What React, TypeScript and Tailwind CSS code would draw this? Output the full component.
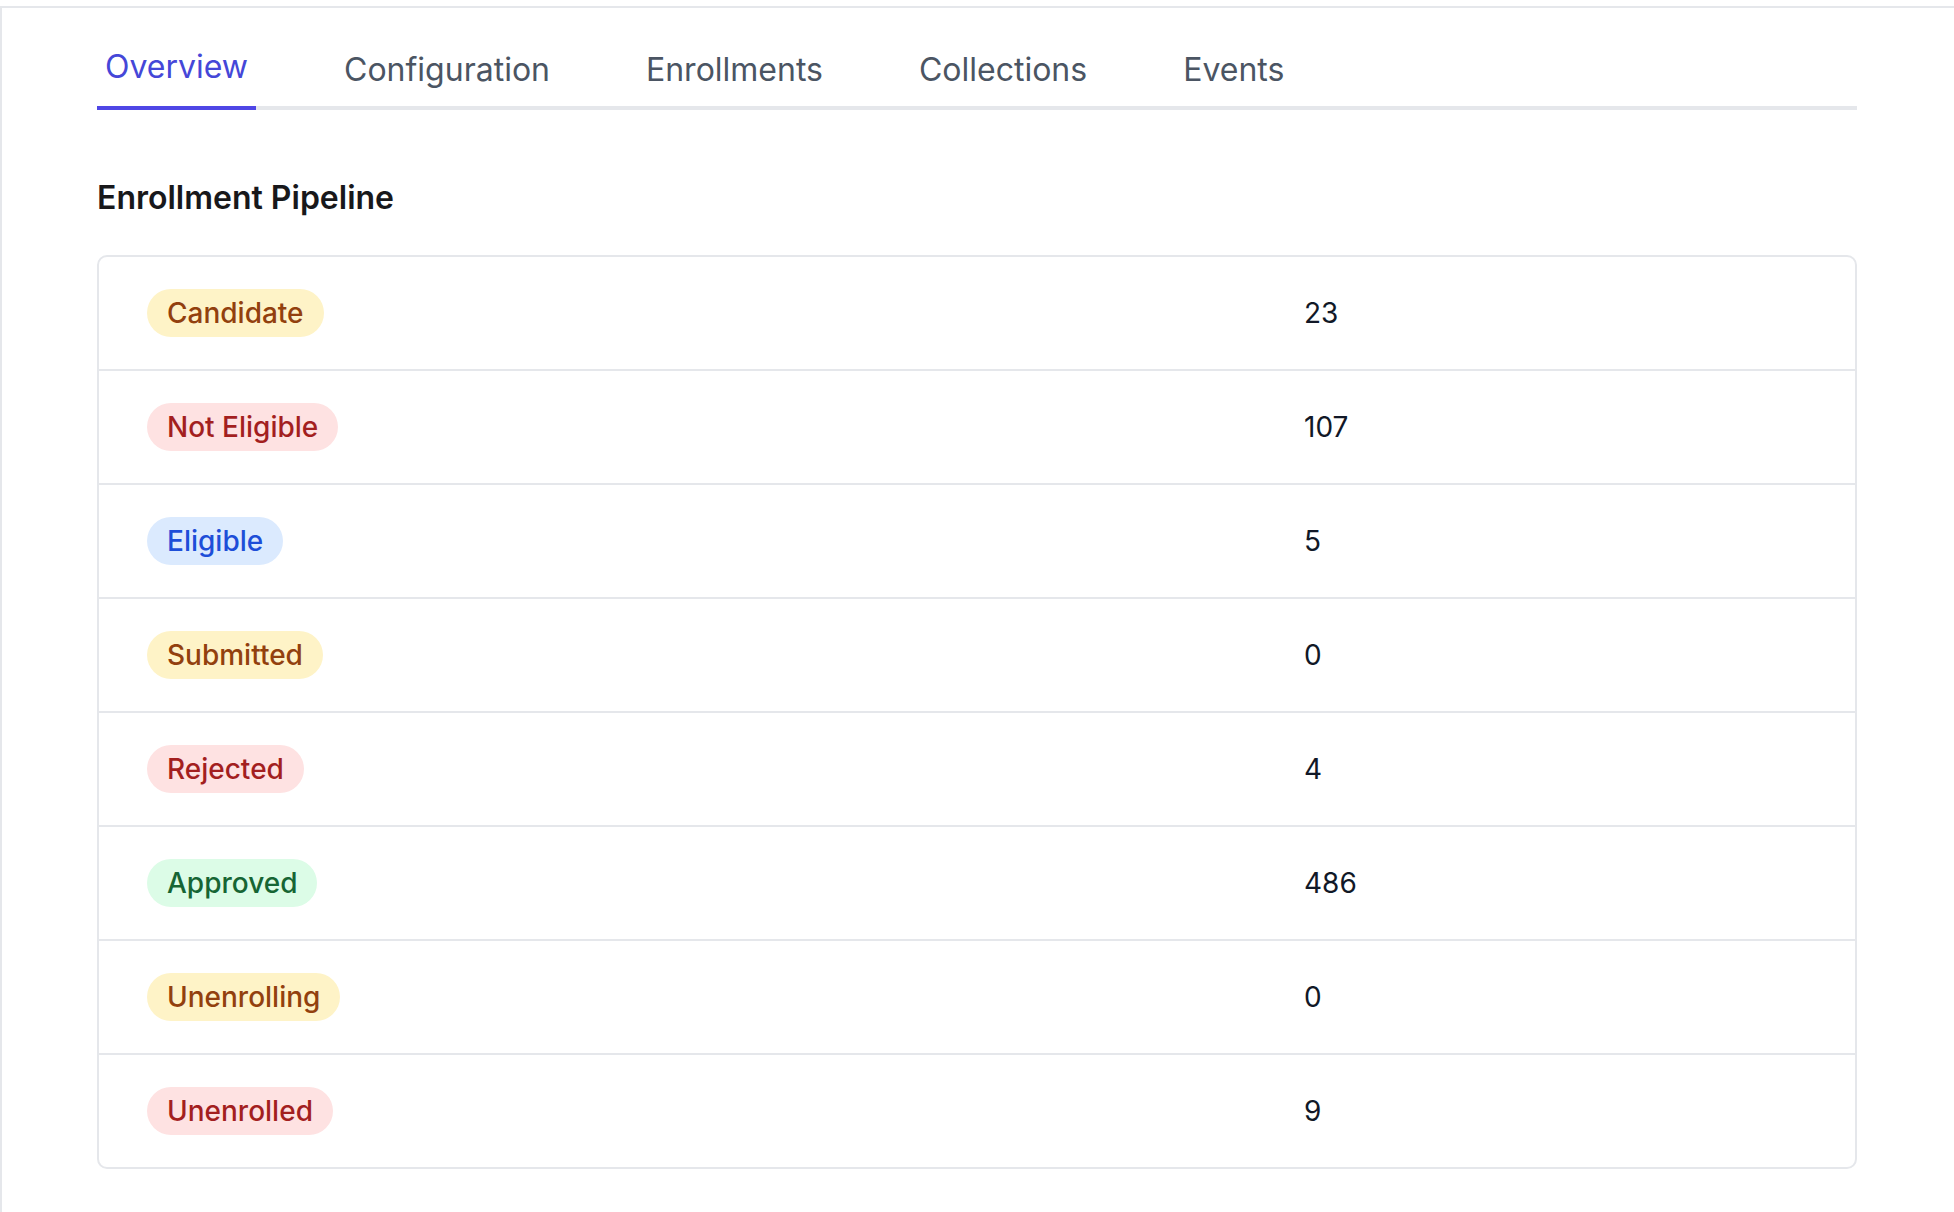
import React from "react";

type Tone = "amber" | "red" | "blue" | "green";

const rows: { label: string; tone: Tone; count: number }[] = [
  { label: "Candidate", tone: "amber", count: 23 },
  { label: "Not Eligible", tone: "red", count: 107 },
  { label: "Eligible", tone: "blue", count: 5 },
  { label: "Submitted", tone: "amber", count: 0 },
  { label: "Rejected", tone: "red", count: 4 },
  { label: "Approved", tone: "green", count: 486 },
  { label: "Unenrolling", tone: "amber", count: 0 },
  { label: "Unenrolled", tone: "red", count: 9 },
];

const toneClass: Record<Tone, string> = {
  amber: "bg-[#fef3c7] text-[#92400e]",
  red: "bg-[#fee2e2] text-[#a31f1f]",
  blue: "bg-[#dbeafe] text-[#1d4ed8]",
  green: "bg-[#dcfce7] text-[#166534]",
};

const tabs = ["Overview", "Configuration", "Enrollments", "Collections", "Events"];

export default function App() {
  return (
    <div className="min-h-screen bg-white pt-[6px] font-[Inter,'Noto_Sans',sans-serif] antialiased">
      <div className="min-h-[1206px] border-l-2 border-t-2 border-[#e5e7eb] pl-[95px] pr-[97px] pt-[35px]">
        <nav className="flex items-end gap-[80px] border-b-[4px] border-[#e5e7eb]">
          {tabs.map((t, i) =>
            i === 0 ? (
              <div
                key={t}
                className="-mb-[4px] border-b-[4px] border-[#4f46e5] px-[8px] pb-[15px] text-[32px] leading-[48px] text-[#4547d8]"
              >
                {t}
              </div>
            ) : (
              <div
                key={t}
                className="-mb-[4px] border-b-[4px] border-transparent px-[8px] pb-[12px] text-[32px] leading-[48px] text-[#4b5563]"
              >
                {t}
              </div>
            )
          )}
        </nav>

        <h2 className="mb-[33px] mt-[64px] text-[32px] font-semibold leading-[48px] text-[#18181b]">
          Enrollment Pipeline
        </h2>

        <div className="overflow-hidden rounded-[10px] border-2 border-[#e5e7eb]">
          {rows.map((r, i) => (
            <div
              key={r.label}
              className={
                "grid grid-cols-[1157px_1fr] items-center " +
                (i < rows.length - 1 ? "border-b-2 border-[#e5e7eb]" : "")
              }
            >
              <div className="px-[48px] py-[32px]">
                <span
                  className={
                    "inline-flex rounded-full px-[20px] py-[4px] text-[28px] font-medium leading-[40px] " +
                    toneClass[r.tone]
                  }
                >
                  {r.label}
                </span>
              </div>
              <div className="px-[48px] text-[28px] leading-[40px] text-[#111827]">{r.count}</div>
            </div>
          ))}
        </div>
      </div>
    </div>
  );
}
